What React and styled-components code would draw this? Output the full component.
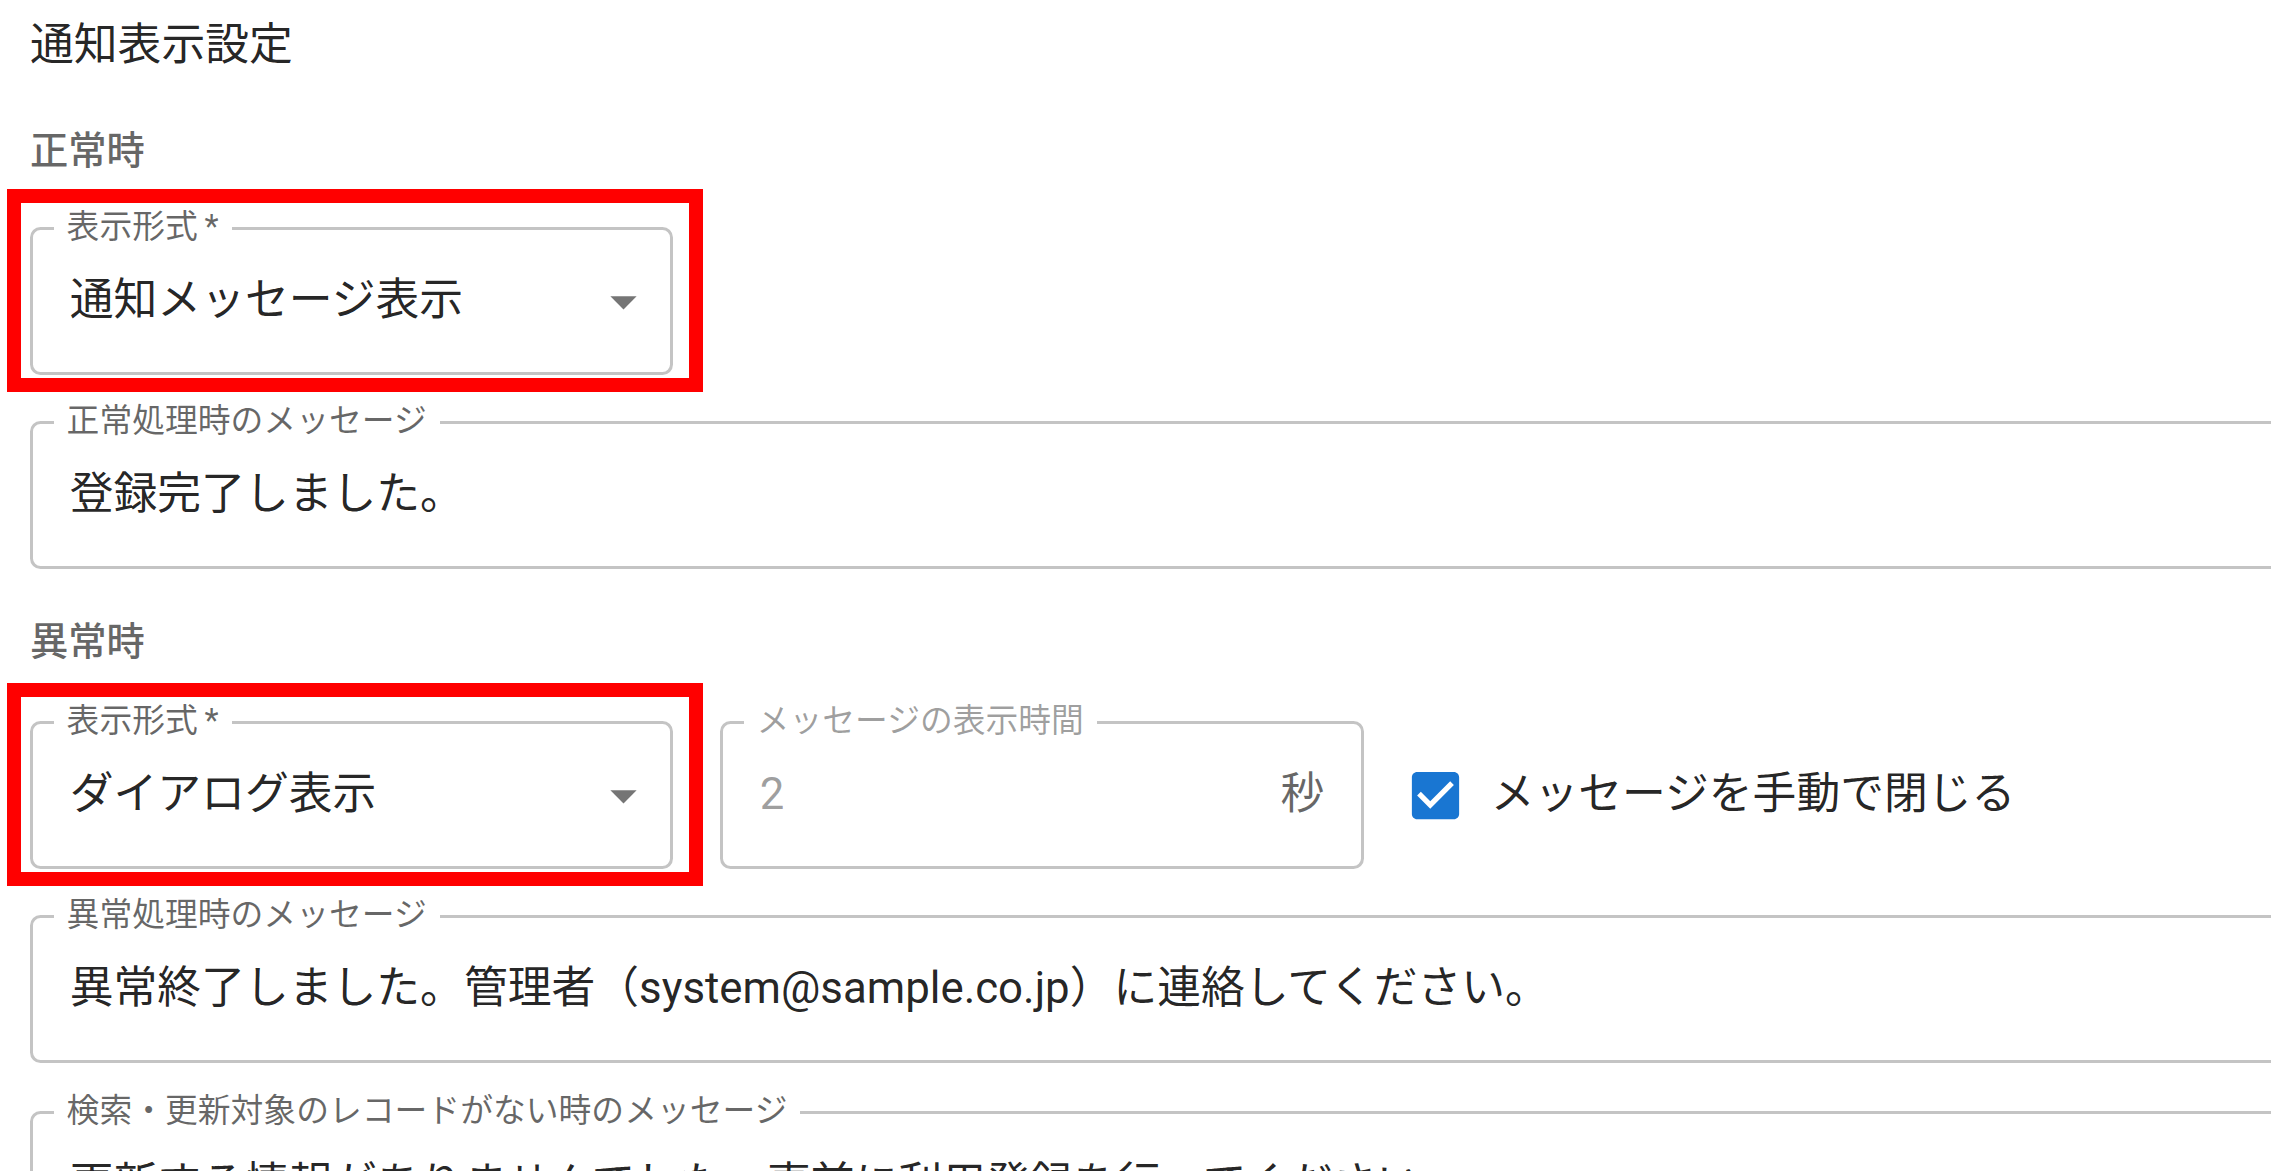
import styled, { createGlobalStyle } from "styled-components";

const GlobalStyle = createGlobalStyle`
  html, body {
    margin: 0;
    padding: 0;
    background: #ffffff;
  }
  body {
    width: 2271px;
    height: 1171px;
    overflow: hidden;
    font-family: "Roboto", "Noto Sans CJK JP", sans-serif;
    color: rgba(0, 0, 0, 0.87);
  }
`;

export default function App() {
  return (
    <>
      <GlobalStyle />
      <Page>
        <Title>通知表示設定</Title>

        <SectionTitle $mt={64}>正常時</SectionTitle>
        <Row $mt={57}>
          <Highlight>
            <SelectBox>
              <FloatingLabel>表示形式&thinsp;*</FloatingLabel>
              <Value>通知メッセージ表示</Value>
              <DropIcon />
            </SelectBox>
          </Highlight>
        </Row>
        <TextBox $mt={46} $wide>
          <FloatingLabel>正常処理時のメッセージ</FloatingLabel>
          <Value>登録完了しました。</Value>
        </TextBox>

        <SectionTitle $mt={54}>異常時</SectionTitle>
        <Row $mt={60}>
          <Highlight>
            <SelectBox>
              <FloatingLabel>表示形式&thinsp;*</FloatingLabel>
              <Value>ダイアログ表示</Value>
              <DropIcon />
            </SelectBox>
          </Highlight>
          <TextBox $disabled $width={644}>
            <FloatingLabel $disabled>メッセージの表示時間</FloatingLabel>
            <Value $disabled>2</Value>
            <Adornment>秒</Adornment>
          </TextBox>
          <CheckLabel>
            <CheckButton>
              <CheckIcon />
            </CheckButton>
            <CheckText>メッセージを手動で閉じる</CheckText>
          </CheckLabel>
        </Row>
        <TextBox $mt={46} $wide>
          <FloatingLabel>異常処理時のメッセージ</FloatingLabel>
          <Value>異常終了しました。管理者（system@sample.co.jp）に連絡してください。</Value>
        </TextBox>
        <TextBox $mt={48} $wide>
          <FloatingLabel>検索・更新対象のレコードがない時のメッセージ</FloatingLabel>
          <Value>更新する情報がありませんでした。事前に利用登録を行ってください。</Value>
        </TextBox>
      </Page>
    </>
  );
}

function DropIcon() {
  return (
    <IconSvg viewBox="0 0 24 24" aria-hidden="true">
      <path d="M7 10l5 5 5-5z" />
    </IconSvg>
  );
}

function CheckIcon() {
  return (
    <CheckSvg viewBox="0 0 24 24" aria-hidden="true">
      <path d="M19 3H5c-1.11 0-2 .9-2 2v14c0 1.1.89 2 2 2h14c1.11 0 2-.9 2-2V5c0-1.1-.89-2-2-2zm-9 14l-5-5 1.41-1.41L10 14.17l7.59-7.59L19 8l-9 9z" />
    </CheckSvg>
  );
}

const Page = styled.div`
  display: flex;
  flex-direction: column;
  align-items: flex-start;
  padding-left: 30px;
  box-sizing: border-box;
  width: 100%;
`;

const Title = styled.div`
  margin-top: 24px;
  font-size: 43.8px;
  line-height: 1;
  font-weight: 400;
  color: rgba(0, 0, 0, 0.87);
`;

const SectionTitle = styled.div`
  margin-top: ${(p) => p.$mt}px;
  font-size: 38.3px;
  line-height: 1;
  font-weight: 500;
  color: rgba(0, 0, 0, 0.6);
`;

const Row = styled.div`
  display: flex;
  align-items: center;
  margin-top: ${(p) => p.$mt}px;
`;

const Highlight = styled.div`
  position: relative;
  margin-right: 47px;

  &::after {
    content: "";
    position: absolute;
    top: -38px;
    left: -23px;
    right: -30px;
    bottom: -17px;
    border: 14px solid #ff0000;
    pointer-events: none;
  }
`;

const Outlined = styled.div`
  position: relative;
  box-sizing: border-box;
  height: 148px;
  display: flex;
  align-items: center;
  border: 3px solid #c4c4c4;
  border-radius: 10.5px;
  background: #ffffff;
`;

const SelectBox = styled(Outlined)`
  width: 643px;
  padding: 0 15px 0 36.75px;
`;

const TextBox = styled(Outlined)`
  margin-top: ${(p) => p.$mt || 0}px;
  padding: 0 36.75px;
  width: ${(p) => (p.$width ? `${p.$width}px` : "auto")};
  align-self: ${(p) => (p.$wide ? "stretch" : "auto")};
  margin-right: ${(p) => (p.$wide ? "-60px" : "0")};
`;

const FloatingLabel = styled.span`
  position: absolute;
  top: -19.6px;
  left: 20.6px;
  padding: 0 13px;
  background: #ffffff;
  font-size: 32.8px;
  line-height: 1;
  white-space: nowrap;
  color: ${(p) => (p.$disabled ? "rgba(0, 0, 0, 0.38)" : "rgba(0, 0, 0, 0.6)")};
`;

const Value = styled.span`
  flex: 1;
  font-size: 43.8px;
  line-height: 1;
  white-space: nowrap;
  color: ${(p) => (p.$disabled ? "rgba(0, 0, 0, 0.38)" : "rgba(0, 0, 0, 0.87)")};
`;

const Adornment = styled.span`
  font-size: 43.8px;
  line-height: 1;
  color: rgba(0, 0, 0, 0.6);
`;

const IconSvg = styled.svg`
  width: 63px;
  height: 63px;
  flex-shrink: 0;
  fill: rgba(0, 0, 0, 0.54);
`;

const CheckLabel = styled.label`
  display: flex;
  align-items: center;
  margin-left: 16.5px;
`;

const CheckButton = styled.span`
  display: flex;
  padding: 23.6px;
`;

const CheckSvg = styled.svg`
  width: 63px;
  height: 63px;
  fill: #1976d2;
`;

const CheckText = styled.span`
  font-size: 43.8px;
  line-height: 1;
  color: rgba(0, 0, 0, 0.87);
  white-space: nowrap;
`;
